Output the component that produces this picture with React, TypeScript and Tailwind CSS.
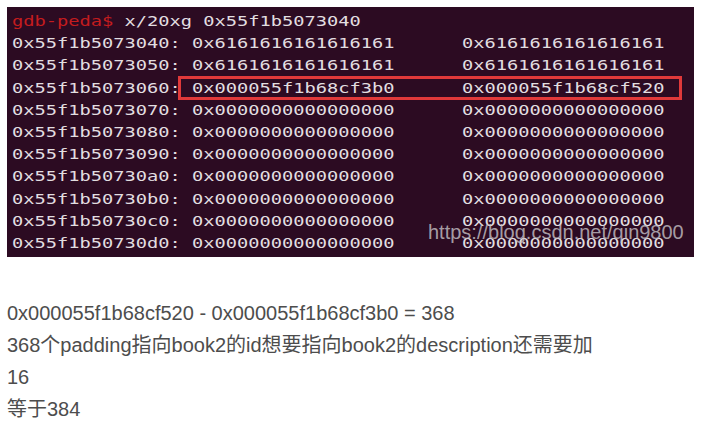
const rows: [string, string, string][] = [
  ['0x55f1b5073040:', '0x6161616161616161', '0x6161616161616161'],
  ['0x55f1b5073050:', '0x6161616161616161', '0x6161616161616161'],
  ['0x55f1b5073060:', '0x000055f1b68cf3b0', '0x000055f1b68cf520'],
  ['0x55f1b5073070:', '0x0000000000000000', '0x0000000000000000'],
  ['0x55f1b5073080:', '0x0000000000000000', '0x0000000000000000'],
  ['0x55f1b5073090:', '0x0000000000000000', '0x0000000000000000'],
  ['0x55f1b50730a0:', '0x0000000000000000', '0x0000000000000000'],
  ['0x55f1b50730b0:', '0x0000000000000000', '0x0000000000000000'],
  ['0x55f1b50730c0:', '0x0000000000000000', '0x0000000000000000'],
  ['0x55f1b50730d0:', '0x0000000000000000', '0x0000000000000000'],
];

export default function App() {
  return (
    <div className="w-[712px] h-[422px] bg-white overflow-hidden">
      {/* terminal screenshot (stretched horizontally, like the original capture) */}
      <div className="relative ml-[7px] mt-[7px] w-[687px] h-[250px] overflow-hidden bg-[#2c0b22] pt-[3px] pl-[5px]">
        <div className="origin-top-left scale-x-[1.3345] font-['DejaVu_Sans_Mono',monospace] text-[14px] leading-[22.2px] text-[#e2dee0]">
          <div className="whitespace-pre">
            <span className="text-[#c41c1e]">gdb-peda$</span> x/20xg 0x55f1b5073040
          </div>
          {rows.map((r) => (
            <div key={r[0]} className="flex whitespace-pre">
              <span className="w-[16ch] shrink-0">{r[0]}</span>
              <span className="w-[24ch] shrink-0">{r[1]}</span>
              <span>{r[2]}</span>
            </div>
          ))}
        </div>

        {/* red highlight box */}
        <div className="absolute left-[171px] top-[69px] w-[504px] h-[24px] border-[3px] border-[#e0393a]" />

        {/* watermark */}
        <div className="absolute left-[421px] top-[213px] font-['Liberation_Sans',Arial,sans-serif] text-[20px] leading-[24px] text-[#c8c4c8]/80">
          https://blog.csdn.net/qin9800
        </div>
      </div>

      {/* notes */}
      <div className="mt-[40px] ml-[7px] w-[600px] font-['Liberation_Sans','Noto_Sans_CJK_SC',sans-serif] text-[20px] leading-[32px] text-[#4d4d4d]">
        <div>0x000055f1b68cf520 - 0x000055f1b68cf3b0 = 368</div>
        <div>368个padding指向book2的id想要指向book2的description还需要加16</div>
        <div>等于384</div>
      </div>
    </div>
  );
}
